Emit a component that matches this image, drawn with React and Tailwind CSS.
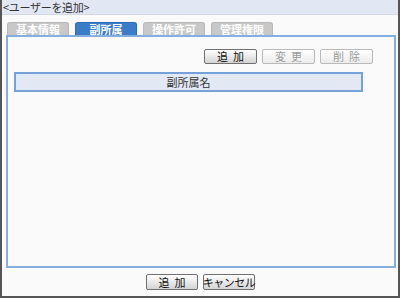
export default function App() {
  const font = { fontFamily: '"Noto Sans CJK JP", "Noto Sans", sans-serif' };
  const btn =
    "h-[15px] w-[53px] flex items-center justify-center rounded-[2px] border text-[11px] leading-none whitespace-nowrap";
  const on = "border-[#707070] bg-gradient-to-b from-[#ffffff] to-[#d4d4d4] text-[#111]";
  const off = "border-[#b9b9b9] bg-gradient-to-b from-[#ffffff] to-[#ececec] text-[#9a9a9a]";
  const tab =
    "w-[62px] h-[13px] rounded-t-[3px] border border-b-0 text-white font-bold text-[11px] leading-[12px] text-center whitespace-nowrap";
  return (
    <div
      style={font}
      className="w-[400px] h-[298px] bg-[#fafafa] border-l-2 border-r-2 border-b-2 border-[#555] flex flex-col overflow-hidden"
    >
      <div className="h-[15px] shrink-0 bg-[#e1e8f4] border-b border-[#d0d8e6] pl-[1px] flex items-center">
        <span className="text-[11px] leading-[14px] tracking-[-0.3px] text-[#333] whitespace-nowrap">
          &lt;ユーザーを追加&gt;
        </span>
      </div>
      <div className="flex gap-[6px] pl-[5px] h-[20px] shrink-0 items-end">
        <div className={`${tab} bg-[#c8c8c8] border-[#b8b8b8]`}>基本情報</div>
        <div className={`${tab} bg-[#3b7cc8] border-[#2f6cb6]`}>副所属</div>
        <div className={`${tab} bg-[#c8c8c8] border-[#b8b8b8]`}>操作許可</div>
        <div className={`${tab} bg-[#c8c8c8] border-[#b8b8b8]`}>管理権限</div>
      </div>
      <div className="ml-[4px] w-[390px] h-[233px] shrink-0 border-2 border-[#84ade0] bg-[#fafafa] flex flex-col">
        <div className="flex justify-end gap-[5px] pr-[21px] pt-[12px]">
          <div className={`${btn} ${on}`}>追&nbsp;&nbsp;加</div>
          <div className={`${btn} ${off}`}>変&nbsp;&nbsp;更</div>
          <div className={`${btn} ${off}`}>削&nbsp;&nbsp;除</div>
        </div>
        <div className="ml-[6px] mt-[8px] w-[349px] h-[20px] border-2 border-[#73a1d8] bg-[#e2e9f5] flex items-center justify-center text-[11px] text-[#333]">
          副所属名
        </div>
      </div>
      <div className="flex justify-center gap-[5px] pt-[6px] pl-[1px]">
        <div className="h-[16px] w-[52px] flex items-center justify-center rounded-[2px] border border-[#707070] bg-gradient-to-b from-[#ffffff] to-[#d4d4d4] text-[11px] leading-none text-[#111] whitespace-nowrap">
          追&nbsp;&nbsp;加
        </div>
        <div className="h-[16px] w-[52px] flex items-center justify-center rounded-[2px] border border-[#707070] bg-gradient-to-b from-[#ffffff] to-[#d4d4d4] text-[11px] leading-none tracking-[-0.5px] text-[#111] whitespace-nowrap">
          キャンセル
        </div>
      </div>
    </div>
  );
}
